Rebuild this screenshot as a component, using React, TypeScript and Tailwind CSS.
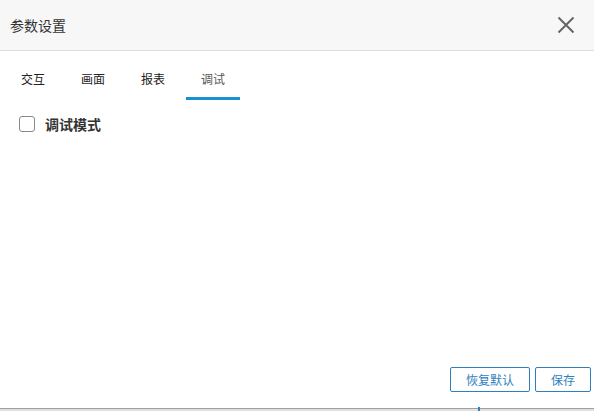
import { useState } from 'react';

const TABS = ['交互', '画面', '报表', '调试'];

function CloseIcon() {
  return (
    <svg width="18" height="18" viewBox="0 0 18 18" fill="none">
      <path d="M1.5 1.5 L16.5 16.5 M16.5 1.5 L1.5 16.5" stroke="#666666" strokeWidth="2" />
    </svg>
  );
}

export default function App() {
  const [active, setActive] = useState(3);
  const [debug, setDebug] = useState(false);

  return (
    <div
      className="flex h-[411px] w-[594px] flex-col bg-white text-[#333333]"
      style={{ fontFamily: '"Noto Sans CJK SC", "Noto Sans", sans-serif' }}
    >
      <header className="flex h-[51px] shrink-0 items-center justify-between border-b border-[#dddddd] bg-[#f7f7f7] pl-[10px] pr-[19px]">
        <span className="text-[14px] leading-none text-[#333333]">参数设置</span>
        <button type="button" className="flex items-center justify-center">
          <CloseIcon />
        </button>
      </header>

      <nav className="flex shrink-0 gap-[6px] pl-[6px] pt-[10px]">
        {TABS.map((tab, i) => (
          <button
            key={tab}
            type="button"
            onClick={() => setActive(i)}
            className={`flex h-[39px] w-[54px] items-center justify-center border-b-[3px] text-[12px] leading-none ${
              active === i ? 'border-[#1a8fd2] text-[#555555]' : 'border-transparent text-[#222222]'
            }`}
          >
            {tab}
          </button>
        ))}
      </nav>

      <div className="flex-1 pl-[19px] pt-[16px]">
        <label className="flex cursor-pointer items-center gap-[10px]">
          <input
            type="checkbox"
            checked={debug}
            onChange={(e) => setDebug(e.target.checked)}
            className="sr-only"
          />
          <span className="h-[16px] w-[16px] rounded-[3px] border border-[#8a8a8a] bg-white" />
          <span className="text-[14px] font-bold leading-none text-[#333333]">调试模式</span>
        </label>
      </div>

      <footer className="flex shrink-0 justify-end gap-[5px] pb-[16px] pr-[3px]">
        <button
          type="button"
          className="h-[25px] rounded-[2px] border border-[#2f7fc0] px-[15px] text-[12px] leading-none text-[#2f7fc0]"
        >
          恢复默认
        </button>
        <button
          type="button"
          className="h-[25px] rounded-[2px] border border-[#2f7fc0] px-[15px] text-[12px] leading-none text-[#2f7fc0]"
        >
          保存
        </button>
      </footer>

      <div className="relative h-[3px] shrink-0 border-t border-[#a0a0a0] bg-[#e0e0e0]">
        <span className="absolute bottom-0 left-[478px] h-[4px] w-[2px] bg-[#2f7fc0]" />
      </div>
    </div>
  );
}
